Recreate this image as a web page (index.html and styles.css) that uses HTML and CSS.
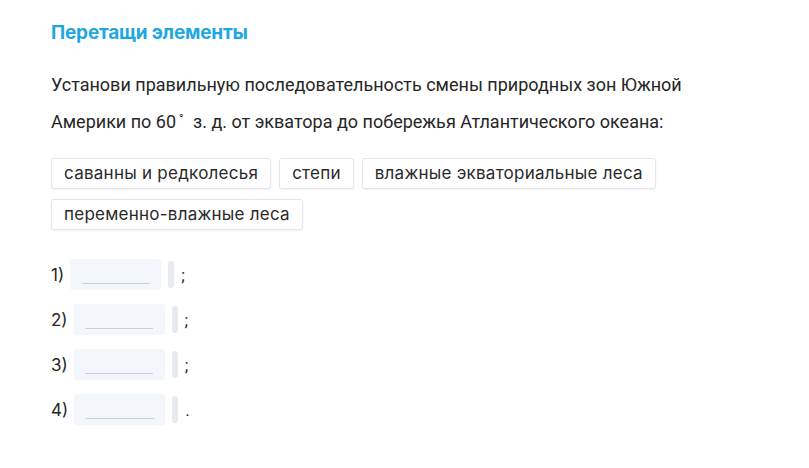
FILE: index.html
```html
<!DOCTYPE html>
<html lang="ru">
<head>
<meta charset="utf-8">
<link rel="stylesheet" href="styles.css">
</head>
<body>
<div class="task">
  <h2 class="title">Перетащи элементы</h2>
  <p class="question">Установи правильную последовательность смены природных зон Южной<br>Америки по 60<span class="deg">°</span> з. д. от экватора до побережья Атлантического океана:</p>
  <div class="chips">
    <span class="chip">саванны и редколесья</span>
    <span class="chip">степи</span>
    <span class="chip">влажные экваториальные леса</span>
    <span class="chip">переменно-влажные леса</span>
  </div>
  <div class="answers">
    <div class="row"><span class="num">1)</span><span class="slot"><span class="line"></span></span><span class="handle"></span><span class="sep">;</span></div>
    <div class="row"><span class="num">2)</span><span class="slot"><span class="line"></span></span><span class="handle"></span><span class="sep">;</span></div>
    <div class="row"><span class="num">3)</span><span class="slot"><span class="line"></span></span><span class="handle"></span><span class="sep">;</span></div>
    <div class="row"><span class="num">4)</span><span class="slot"><span class="line"></span></span><span class="handle"></span><span class="sep">.</span></div>
  </div>
</div>
</body>
</html>
```
FILE: styles.css
```css
html, body {
  margin: 0;
  padding: 0;
  background: #ffffff;
}
body {
  font-family: Roboto, "Liberation Sans", sans-serif;
  color: #222222;
}
.task {
  padding: 21px 0 0 51px;
  width: 720px;
}
.title {
  margin: 0;
  font-family: Inter, "Noto Sans", sans-serif;
  font-weight: 700;
  font-size: 19px;
  line-height: 24px;
  color: #1ea7e1;
  letter-spacing: -0.2px;
}
.question {
  margin: 21px 0 0 0;
  font-size: 18px;
  line-height: 37px;
  color: #262626;
  white-space: nowrap;
}
.deg {
  margin: 0 5px 0 3px;
  font-size: 12px;
  line-height: 0;
  vertical-align: 5px;
}
.chips {
  margin-top: 18px;
  display: flex;
  flex-wrap: wrap;
  gap: 10px 8px;
  width: 640px;
}
.chip {
  font-family: Inter, "Noto Sans", sans-serif;
  font-size: 17px;
  line-height: 29px;
  padding: 0 12px;
  border: 1px solid #e3e5e8;
  border-radius: 3px;
  box-shadow: 0 1px 2px rgba(0,0,0,0.06);
  color: #2a2a2a;
  background: #fff;
  letter-spacing: 0.25px;
}
.answers {
  margin-top: 29px;
  display: flex;
  flex-direction: column;
  gap: 14px;
}
.row {
  display: flex;
  align-items: center;
  height: 31px;
  font-size: 17px;
  color: #262626;
}
.num {
  flex: none;
  margin-right: 6px;
  font-family: Inter, "Noto Sans", sans-serif;
}
.slot {
  width: 91px;
  height: 31px;
  background: #f3f6fb;
  border-radius: 3px;
  display: flex;
  justify-content: center;
  align-items: flex-end;
}
.line {
  width: 68px;
  height: 1px;
  background: #c9d0d8;
  margin-bottom: 6px;
}
.handle {
  width: 6px;
  height: 27px;
  background: #e7eaee;
  border-radius: 3px;
  margin-left: 7px;
}
.sep {
  margin-left: 7px;
}
```
